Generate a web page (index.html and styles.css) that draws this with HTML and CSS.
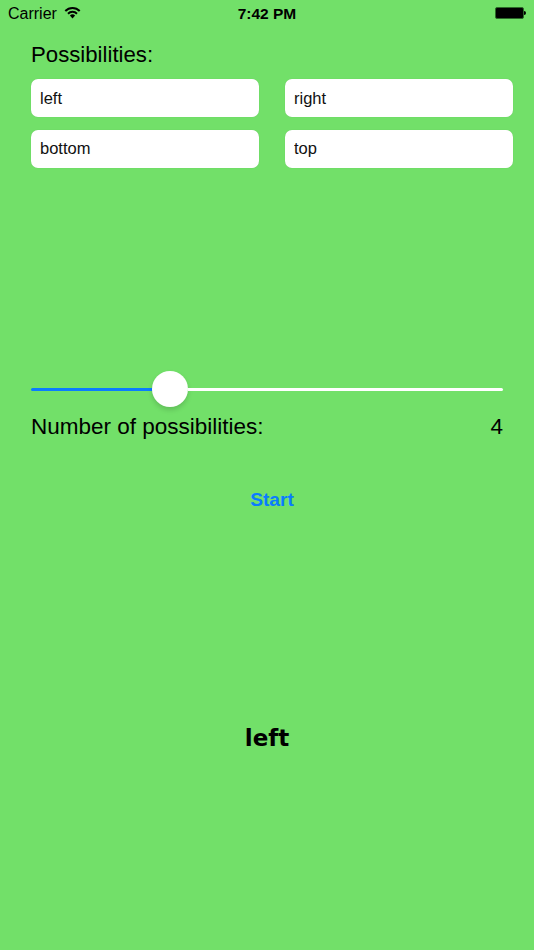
FILE: index.html

```html
<!DOCTYPE html>
<html lang="en">
<head>
  <meta charset="UTF-8" />
  <meta name="viewport" content="width=device-width, initial-scale=1.0"/>
  <title>Possibilities</title>
  <link rel="stylesheet" href="styles.css">
</head>
<body>
  <!-- Status bar -->
  <div class="status-bar">
    <div class="status-left">
      <span>Carrier</span>
      <svg class="wifi" width="17" height="13" viewBox="0 0 17 13">
        <path d="M0.6 4.3 A11 11 0 0 1 16.4 4.3 L15 5.8 A9 9 0 0 0 2 5.8 Z" fill="#000"/>
        <path d="M3.3 7 A7.2 7.2 0 0 1 13.7 7 L12.3 8.4 A5.2 5.2 0 0 0 4.7 8.4 Z" fill="#000"/>
        <path d="M5.9 9.6 A3.6 3.6 0 0 1 11.1 9.6 L8.5 12.4 Z" fill="#000"/>
      </svg>
    </div>
    <div class="status-time">7:42 PM</div>
    <div class="status-right">
      <div class="battery"></div>
      <div class="battery-tip"></div>
    </div>
  </div>

  <div class="content">
    <div class="title">Possibilities:</div>

    <div class="inputs">
      <input class="option-input" type="text" value="left">
      <input class="option-input" type="text" value="right">
      <input class="option-input" type="text" value="bottom">
      <input class="option-input" type="text" value="top">
    </div>

    <!-- Slider -->
    <div class="slider">
      <div class="slider-fill"></div>
      <div class="slider-thumb"></div>
      <div class="slider-rest"></div>
    </div>

    <div class="count-row">
      <span>Number of possibilities:</span>
      <span>4</span>
    </div>

    <button class="start-btn">Start</button>

    <div class="result">left</div>
  </div>
</body>
</html>
```

FILE: styles.css

```css
body {
  background-color: #72e069;
  font-family: "Liberation Sans", Arial, sans-serif;
  margin: 0;
  height: 950px;
  overflow: hidden;
  color: #000;
}

/* Status bar */
.status-bar {
  display: flex;
  align-items: center;
  justify-content: space-between;
  height: 28px;
  padding: 0 8px;
  font-size: 16px;
}

.status-left {
  display: flex;
  align-items: center;
  gap: 7px;
  width: 120px;
}

.wifi {
  margin-top: -4px;
}

.status-time {
  font-weight: bold;
  font-size: 15.5px;
  margin-top: -1px;
}

.status-right {
  display: flex;
  align-items: center;
  justify-content: flex-end;
  width: 120px;
  margin-top: -2px;
}

.battery {
  width: 27px;
  height: 10px;
  background-color: #000;
  border-radius: 2px;
  border: 1px solid #2c6a28;
}

.battery-tip {
  width: 2px;
  height: 4px;
  background-color: #000;
  border-radius: 0 2px 2px 0;
}

.content {
  padding: 0 21px 0 31px;
}

.title {
  font-size: 22.2px;
  line-height: 26px;
  margin-top: 14px;
  margin-bottom: 11px;
}

.inputs {
  display: grid;
  grid-template-columns: 228px 228px;
  column-gap: 26px;
  row-gap: 12.5px;
}

.option-input {
  box-sizing: border-box;
  width: 100%;
  height: 38px;
  padding: 0 9px;
  border: none;
  border-radius: 7px;
  background-color: #fff;
  color: #111;
  font-family: inherit;
  font-size: 16.5px;
  box-shadow: 0 0 1px rgba(0, 0, 0, 0.15);
}

.slider {
  display: flex;
  align-items: center;
  width: 472px;
  height: 36px;
  margin-top: 203.5px;
}

.slider-fill {
  width: 121px;
  height: 3px;
  background-color: #0a7cff;
  border-radius: 2px 0 0 2px;
}

.slider-thumb {
  flex: none;
  width: 36px;
  height: 36px;
  border-radius: 50%;
  background-color: #fff;
  box-shadow: 0 3px 5px rgba(0, 0, 0, 0.15);
}

.slider-rest {
  flex-grow: 1;
  height: 3px;
  background-color: #fff;
  border-radius: 0 2px 2px 0;
}

.count-row {
  display: flex;
  justify-content: space-between;
  width: 472px;
  margin-top: 7px;
  font-size: 22.5px;
  line-height: 26px;
}

.start-btn {
  display: block;
  width: 482px;
  margin-top: 48px;
  padding: 0;
  border: none;
  background: none;
  color: #0a7cff;
  font-family: inherit;
  font-size: 19.2px;
  font-weight: bold;
  line-height: 24px;
  text-align: center;
  cursor: pointer;
}

.result {
  width: 472px;
  margin-top: 211px;
  font-family: "DejaVu Sans", sans-serif;
  font-size: 23px;
  font-weight: bold;
  line-height: 30px;
  text-align: center;
}
```
